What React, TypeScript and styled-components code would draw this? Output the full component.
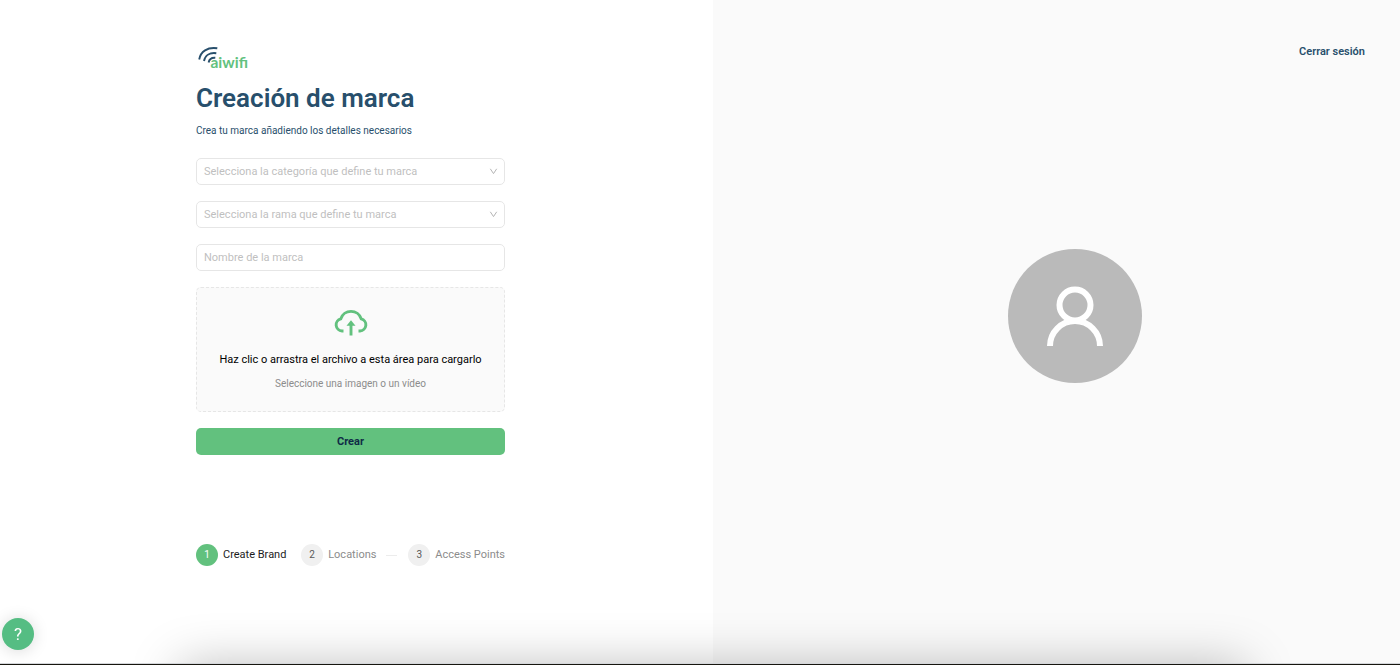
import React from "react";
import styled, { createGlobalStyle } from "styled-components";

const GlobalStyle = createGlobalStyle`
  *, *::before, *::after { box-sizing: border-box; }
  body {
    margin: 0;
    background: #ffffff;
    color: #000000;
    font-family: Roboto, "Liberation Sans", sans-serif;
    font-size: 11px;
    line-height: 16px;
    overflow: hidden;
  }
  button, input, select { font: inherit; }
`;

const Page = styled.div`
  display: grid;
  grid-template-columns: 713fr 687fr;
  min-height: 100vh;
`;

const FormPanel = styled.main`
  padding: 44px 208px 0 196px;
`;

const PreviewPanel = styled.aside`
  display: flex;
  flex-direction: column;
  padding: 40px 35px 0;
  background: #fafafa;
`;

const Logo = styled.svg`
  display: block;
  width: 56px;
  height: 28px;
`;

const Title = styled.h1`
  margin: 9px 0 0;
  color: #284f6c;
  font-size: 26px;
  font-weight: 600;
  line-height: 34px;
  white-space: nowrap;
`;

const Subtitle = styled.p`
  margin: 8px 0 19px;
  color: #284f6c;
  font-size: 10px;
  line-height: 16px;
  white-space: nowrap;
`;

const Form = styled.form`
  display: grid;
  gap: 16px;
`;

const Field = styled.div`
  position: relative;
  height: 27px;
`;

const fieldLook = `
  display: block;
  width: 100%;
  height: 27px;
  padding: 0 7px;
  border: 1px solid #e6e6e6;
  border-radius: 5px;
  background: #ffffff;
  outline-color: #62c17e;
`;

const Select = styled.select`
  ${fieldLook}
  appearance: none;
  color: #bfbfbf;
`;

const TextInput = styled.input`
  ${fieldLook}
  color: #000000;
  &::placeholder { color: #bfbfbf; opacity: 1; }
`;

const Chevron = styled.svg`
  position: absolute;
  top: 9px;
  right: 7px;
  width: 9px;
  height: 9px;
  pointer-events: none;
`;

const Dropzone = styled.label`
  display: flex;
  flex-direction: column;
  align-items: center;
  height: 125px;
  padding-top: 19px;
  border: 1px dashed #e6e6e6;
  border-radius: 5px;
  background: #fafafa;
  cursor: pointer;
  white-space: nowrap;
`;

const FileInput = styled.input`
  position: absolute;
  width: 1px;
  height: 1px;
  opacity: 0;
`;

const CloudIcon = styled.svg`
  width: 34px;
  height: 32px;
`;

const DropTitle = styled.span`
  margin-top: 13px;
`;

const DropHint = styled.span`
  margin-top: 8px;
  color: #8c8c8c;
  font-size: 10px;
`;

const SubmitButton = styled.button`
  height: 27px;
  padding: 0;
  border: 0;
  border-radius: 5px;
  background: #62c17e;
  color: #0f2b46;
  font-weight: 700;
  cursor: pointer;
`;

const Steps = styled.ol`
  display: flex;
  justify-content: space-between;
  align-items: center;
  margin: 89px 0 0;
  padding: 0;
  list-style: none;
  white-space: nowrap;
`;

const Step = styled.li<{ $active?: boolean }>`
  display: flex;
  align-items: center;
  gap: 5px;
  padding-right: ${(p) => (p.$active ? "4px" : "0")};
  color: ${(p) => (p.$active ? "#1c1c1c" : "#8c8c8c")};
`;

const StepNumber = styled.span<{ $active?: boolean }>`
  display: grid;
  place-items: center;
  width: 22px;
  height: 22px;
  border-radius: 50%;
  background: ${(p) => (p.$active ? "#62c17e" : "#f0f0f0")};
  color: ${(p) => (p.$active ? "#ffffff" : "#595959")};
  font-size: 10px;
`;

const StepLine = styled.span`
  width: 11px;
  height: 1px;
  margin-left: 5px;
  background: #ececec;
`;

const Logout = styled.a`
  align-self: flex-end;
  padding: 4px 0;
  color: #284f6c;
  font-weight: 600;
  text-decoration: none;
`;

const AvatarArea = styled.div`
  display: flex;
  flex: 1;
  align-items: center;
  justify-content: center;
  padding: 0 0 97px 37px;
`;

const Avatar = styled.div`
  display: grid;
  place-items: center;
  width: 134px;
  height: 134px;
  border-radius: 50%;
  background: #bababa;
`;

const HelpButton = styled.button`
  position: fixed;
  left: 2px;
  bottom: 15px;
  display: grid;
  place-items: center;
  width: 32px;
  height: 32px;
  padding: 0;
  border: 0;
  border-radius: 50%;
  background: #55bd83;
  color: #ffffff;
  font-size: 17px;
  box-shadow: 0 1px 16px rgba(0, 0, 0, 0.15);
  cursor: pointer;
`;

const BottomShade = styled.div`
  position: fixed;
  right: 155px;
  bottom: -80px;
  left: 180px;
  height: 80px;
  box-shadow: 0 0 50px rgba(0, 0, 0, 0.26);
  pointer-events: none;
`;

const BottomEdge = styled.div`
  position: fixed;
  right: 0;
  bottom: 0;
  left: 0;
  height: 2px;
  border-top: 1px solid #d4d6da;
  background: #17160f;
`;

function SelectField({ label }: { label: string }) {
  return (
    <Field>
      <Select aria-label={label} defaultValue="">
        <option value="">{label}</option>
      </Select>
      <Chevron viewBox="0 0 9 9" aria-hidden="true">
        <path d="M1.3 1.8 4.5 6.6 7.7 1.8" fill="none" stroke="#b5b5b5" strokeWidth="1" />
      </Chevron>
    </Field>
  );
}

export default function App() {
  return (
    <>
      <GlobalStyle />
      <Page>
        <FormPanel>
          <Logo viewBox="0 0 56 28" role="img" aria-label="aiwifi">
            <g fill="none" stroke="#284f6c" strokeWidth="1.9">
              <path d="M3.200 15.500C4.500 7.500 11.500 2.800 21.300 4.300" />
              <path d="M8 17C9 11.500 13.500 8.300 20.300 9.200" />
              <path d="M12.600 18.500C13.300 15 15.500 13.500 19.300 13.800" />
            </g>
            <text x="14.500" y="24" fill="#62c17e" fontFamily="Lato, sans-serif" fontSize="15.500" fontWeight="700">
              aiwifi
            </text>
          </Logo>
          <Title>Creación de marca</Title>
          <Subtitle>Crea tu marca añadiendo los detalles necesarios</Subtitle>
          <Form onSubmit={(e) => e.preventDefault()}>
            <SelectField label="Selecciona la categoría que define tu marca" />
            <SelectField label="Selecciona la rama que define tu marca" />
            <TextInput type="text" aria-label="Nombre de la marca" placeholder="Nombre de la marca" />
            <Dropzone>
              <FileInput type="file" accept="image/*,video/*" />
              <CloudIcon viewBox="0 0 34 32" aria-hidden="true">
                <path
                  d="M9.500 24H8A6.200 6.200 0 0 1 6.800 11.800A10.700 10.700 0 0 1 27.200 11.800A6.200 6.200 0 0 1 26 24H24.500"
                  fill="none"
                  stroke="#62c17e"
                  strokeWidth="2.900"
                />
                <path d="M17 28.500V16" stroke="#62c17e" strokeWidth="2.900" />
                <path d="M17 13.200 21.500 18.800H12.500Z" fill="#62c17e" />
              </CloudIcon>
              <DropTitle>Haz clic o arrastra el archivo a esta área para cargarlo</DropTitle>
              <DropHint>Seleccione una imagen o un vídeo</DropHint>
            </Dropzone>
            <SubmitButton type="submit">Crear</SubmitButton>
          </Form>
          <Steps>
            <Step $active aria-current="step">
              <StepNumber $active>1</StepNumber>
              Create Brand
            </Step>
            <Step>
              <StepNumber>2</StepNumber>
              Locations
              <StepLine />
            </Step>
            <Step>
              <StepNumber>3</StepNumber>
              Access Points
            </Step>
          </Steps>
        </FormPanel>
        <PreviewPanel>
          <Logout href="#">Cerrar sesión</Logout>
          <AvatarArea>
            <Avatar>
              <svg width="58" height="62" viewBox="0 0 58 62" role="img" aria-label="Avatar">
                <g fill="none" stroke="#ffffff" strokeWidth="6">
                  <circle cx="29" cy="20" r="15.500" />
                  <path d="M4 61A25 25 0 0 1 54 61" />
                </g>
              </svg>
            </Avatar>
          </AvatarArea>
        </PreviewPanel>
      </Page>
      <BottomShade />
      <HelpButton type="button" aria-label="Ayuda">?</HelpButton>
      <BottomEdge />
    </>
  );
}
